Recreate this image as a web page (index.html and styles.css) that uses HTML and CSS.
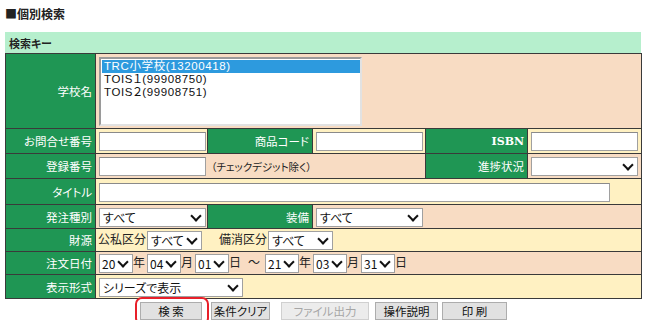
FILE: index.html
```html
<!DOCTYPE html>
<html lang="ja">
<head>
<meta charset="utf-8">
<link rel="stylesheet" href="styles.css">
</head>
<body>
<div class="page">
  <h1 class="title">■個別検索</h1>
  <div class="keyhead">検索キー</div>
  <table class="form">
    <colgroup>
      <col class="c1"><col class="c2"><col class="c3"><col class="c4"><col class="c5"><col class="c6">
    </colgroup>
    <tr class="r-school peach">
      <th>学校名</th>
      <td colspan="5">
        <div class="listbox">
          <div class="opt on">TRC小学校(13200418)</div>
          <div class="opt">TOIS１(99908750)</div>
          <div class="opt">TOIS２(99908751)</div>
        </div>
      </td>
    </tr>
    <tr class="r25 yellow">
      <th>お問合せ番号</th>
      <td><input class="txt w107" type="text"></td>
      <th>商品コード</th>
      <td><input class="txt w107" type="text"></td>
      <th class="latin">ISBN</th>
      <td><input class="txt w107" type="text"></td>
    </tr>
    <tr class="r25 peach">
      <th>登録番号</th>
      <td colspan="3"><input class="txt w107" type="text"><span class="note">（チェックデジット除く）</span></td>
      <th>進捗状況</th>
      <td><span class="sel w107"></span></td>
    </tr>
    <tr class="r26 yellow">
      <th>タイトル</th>
      <td colspan="5"><input class="txt w511" type="text"></td>
    </tr>
    <tr class="r24 peach">
      <th>発注種別</th>
      <td><span class="sel w107">すべて</span></td>
      <th>装備</th>
      <td colspan="3"><span class="sel w107">すべて</span></td>
    </tr>
    <tr class="r23 yellow">
      <th>財源</th>
      <td colspan="5" class="inline">公私区分<span class="sel w55">すべて</span><span class="gap"></span>備消区分<span class="sel w65">すべて</span></td>
    </tr>
    <tr class="r23 peach">
      <th>注文日付</th>
      <td colspan="5" class="inline"><span class="sel dt">20</span>年<span class="sel dt">04</span>月<span class="sel dt">01</span>日<span class="tilde">～</span><span class="sel dt">21</span>年<span class="sel dt">03</span>月<span class="sel dt">31</span>日</td>
    </tr>
    <tr class="r24 yellow">
      <th>表示形式</th>
      <td colspan="5"><span class="sel w144">シリーズで表示</span></td>
    </tr>
  </table>
  <div class="buttons">
    <span class="hl"><button class="btn b-search">検 索</button></span>
    <button class="btn b-clear">条件クリア</button>
    <button class="btn b-file" disabled>ファイル出力</button>
    <button class="btn b-help">操作説明</button>
    <button class="btn b-print">印 刷</button>
  </div>
</div>
</body>
</html>
```
FILE: styles.css
```css
html, body {
  margin: 0;
  padding: 0;
  background: #ffffff;
}
body {
  font-family: "Noto Sans CJK JP", "Noto Sans", sans-serif;
  font-size: 12px;
  color: #222;
  font-feature-settings: "palt" 1;
}
.page {
  padding: 6px 8px 0 5px;
}
.title {
  margin: 0;
  font-size: 12px;
  line-height: 16px;
  font-weight: bold;
  color: #222;
  height: 26px;
}
.keyhead {
  width: 636px;
  height: 21px;
  box-sizing: border-box;
  background: #b6efcd;
  font-weight: bold;
  font-size: 11px;
  line-height: 22px;
  padding-left: 4px;
  color: #222;
}
.form {
  width: 637px;
  border-collapse: collapse;
  table-layout: fixed;
  border-left: 1px solid #2a2a2a;
  border-right: 1px solid #555;
}
.c1 { width: 90px; }
.c2 { width: 112px; }
.c3 { width: 105px; }
.c4 { width: 113px; }
.c5 { width: 102px; }
.c6 { width: 114px; }
.form th, .form td {
  border: 1px solid #3a3a3a;
  padding: 0 0 0 2px;
  white-space: nowrap;
}
.form th {
  background: #1f9654;
  color: #ffffff;
  font-weight: normal;
  text-align: right;
  padding: 0 3px 0 0;
  font-size: 11.5px;
}
.form th.latin {
  font-family: "DejaVu Serif", "Liberation Serif", serif;
  font-weight: bold;
  font-size: 11px;
}
.peach td { background: #f8dcc3; }
.yellow td { background: #fff1c2; }
.r-school { height: 75px; }
.r25 { height: 25px; }
.r26 { height: 26px; }
.r24 { height: 24px; }
.r23 { height: 23px; }
td, th { vertical-align: middle; }

.listbox {
  width: 263px;
  height: 69px;
  box-sizing: border-box;
  background: #fff;
  border: 2px solid #e2e2e2;
  border-top-color: #9a9a9a;
  border-left-color: #9a9a9a;
  padding: 1px 0 0 1px;
  margin-left: 1px;
}
.opt {
  height: 13px;
  line-height: 13px;
  font-family: "Liberation Sans", "Noto Sans CJK JP", sans-serif;
  font-size: 11.5px;
  color: #111;
  padding-left: 2px;
  letter-spacing: 0.6px;
  overflow: hidden;
}
.opt.on {
  background: #2d9ade;
  color: #fff;
}
.txt {
  display: inline-block;
  height: 19px;
  box-sizing: border-box;
  border: 1px solid #a0a0a0;
  border-top-color: #8a8a8a;
  background: #fff;
  margin: 0 0 0 1px;
  padding: 0;
  vertical-align: middle;
  outline: none;
}
.w107 { width: 107px; }
.w511 { width: 511px; }
.w55 { width: 55px; }
.w65 { width: 65px; }
.w144 { width: 144px; }
.note {
  margin-left: 5px;
  vertical-align: middle;
  font-size: 10.5px;
  color: #222;
}
.sel {
  display: inline-block;
  position: relative;
  box-sizing: border-box;
  height: 19px;
  border: 1px solid #a0a0a0;
  background: #fff;
  margin-left: 1px;
  padding-left: 3px;
  line-height: 17px;
  font-size: 12px;
  color: #111;
  vertical-align: middle;
}
.sel::after {
  content: "";
  position: absolute;
  right: 5px;
  top: 3px;
  width: 6px;
  height: 6px;
  border-right: 2px solid #111;
  border-bottom: 2px solid #111;
  transform: rotate(45deg);
}
.sel.dt {
  width: 34px;
  padding-left: 2px;
  margin-left: 2px;
}
.sel.dt:first-child { margin-left: 1px; }
.inline {
  font-size: 12px;
  color: #222;
}
.gap { display: inline-block; width: 17px; }
.tilde { display: inline-block; margin: 0 3px 0 7px; }

.buttons {
  display: flex;
  justify-content: center;
  align-items: center;
  width: 637px;
  margin-top: 3px;
}
.hl {
  position: relative;
  display: inline-flex;
}
.hl::after {
  content: "";
  position: absolute;
  left: -5px;
  right: -7px;
  top: -5px;
  bottom: -5px;
  border: 2px solid #e8202a;
  border-radius: 7px;
}
.btn {
  height: 18px;
  box-sizing: border-box;
  border: 1px solid #adadad;
  background: #e1e1e1;
  font-family: "Noto Sans CJK JP", sans-serif;
  font-feature-settings: "palt" 1;
  font-size: 11.5px;
  color: #111;
  padding: 0;
  line-height: 15px;
  border-radius: 0;
}
.b-search { width: 62px; }
.b-clear { width: 59px; margin-left: 9px; }
.b-file { width: 88px; margin-left: 11px; color: #a6a6a6; background: #ececec; border-color: #d0d0d0; }
.b-help { width: 63px; margin-left: 6px; }
.b-print { width: 65px; margin-left: 4px; }
```
